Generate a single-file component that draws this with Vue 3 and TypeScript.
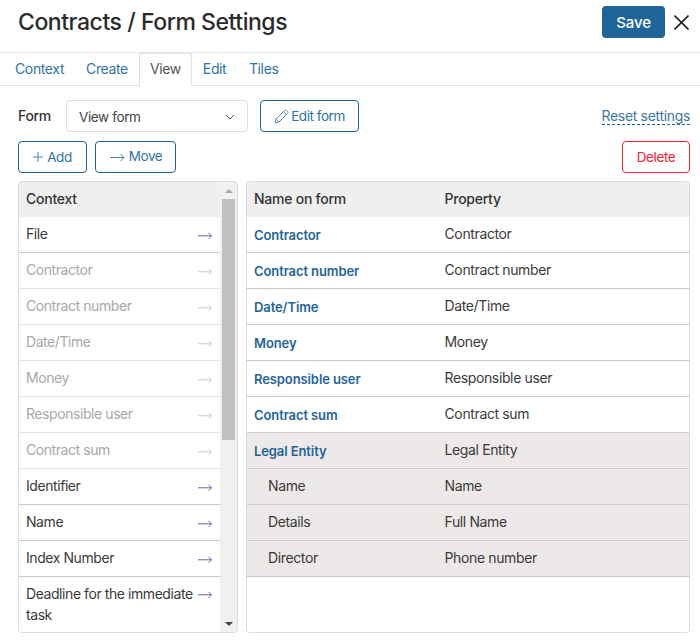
<script setup lang="ts">
const tabs = ['Context', 'Create', 'View', 'Edit', 'Tiles']
const contextRows = [
  { name: 'File', off: false },
  { name: 'Contractor', off: true },
  { name: 'Contract number', off: true },
  { name: 'Date/Time', off: true },
  { name: 'Money', off: true },
  { name: 'Responsible user', off: true },
  { name: 'Contract sum', off: true },
  { name: 'Identifier', off: false },
  { name: 'Name', off: false },
  { name: 'Index Number', off: false },
  { name: 'Deadline for the immediate task', off: false },
]
const formRows = [
  { name: 'Contractor', prop: 'Contractor', kind: 'link' },
  { name: 'Contract number', prop: 'Contract number', kind: 'link' },
  { name: 'Date/Time', prop: 'Date/Time', kind: 'link' },
  { name: 'Money', prop: 'Money', kind: 'link' },
  { name: 'Responsible user', prop: 'Responsible user', kind: 'link' },
  { name: 'Contract sum', prop: 'Contract sum', kind: 'link' },
  { name: 'Legal Entity', prop: 'Legal Entity', kind: 'group' },
  { name: 'Name', prop: 'Name', kind: 'child' },
  { name: 'Details', prop: 'Full Name', kind: 'child' },
  { name: 'Director', prop: 'Phone number', kind: 'child' },
]
</script>

<template>
  <div class="page">
    <header class="top">
      <h1>Contracts / Form Settings</h1>
      <div class="top-actions">
        <button class="save">Save</button>
        <svg class="close" width="15" height="15" viewBox="0 0 15 15"><path d="M0.5 0.5 14.5 14.5M14.5 0.5 0.5 14.5" stroke="#1f1f1f" stroke-width="1.6" fill="none" /></svg>
      </div>
    </header>
    <nav class="tabs">
      <span v-for="t in tabs" :key="t" class="tab" :class="{ active: t === 'View' }">{{ t }}</span>
    </nav>
    <section class="content">
      <div class="form-row">
        <span class="form-label">Form</span>
        <div class="select">
          <span>View form</span>
          <svg width="10" height="6" viewBox="0 0 10 6"><path d="M1 1 5 5 9 1" stroke="#555" stroke-width="1" fill="none" /></svg>
        </div>
        <button class="btn edit">
          <svg width="15" height="15" viewBox="0 0 15 15"><path d="M1 14 2 10 10.5 1.5a1.4 1.4 0 0 1 2 0l1 1a1.4 1.4 0 0 1 0 2L5 13ZM2 10 5 13M9.5 2.5 12.5 5.5" stroke="#5b8db5" stroke-width="1" fill="none" /></svg>
          Edit form
        </button>
        <a class="reset">Reset settings</a>
      </div>
      <div class="action-row">
        <button class="btn add">
          <svg width="10" height="10" viewBox="0 0 10 10"><path d="M5 0V10M0 5H10" stroke="#4a82ab" stroke-width="1" fill="none" /></svg>
          Add
        </button>
        <button class="btn move">
          <svg width="15" height="9" viewBox="0 0 15 9"><path d="M0 4.5H14M10.5 1 14 4.5 10.5 8" stroke="#4a82ab" stroke-width="1" fill="none" /></svg>
          <span class="move-label">Move</span>
        </button>
        <button class="btn delete">Delete</button>
      </div>
      <div class="panels">
        <div class="panel left">
          <div class="left-list">
            <div class="head">Context</div>
            <div v-for="r in contextRows" :key="r.name" class="ctx-row" :class="{ off: r.off }">
              <span class="ctx-name">{{ r.name }}</span>
              <svg class="arrow" width="14" height="9" viewBox="0 0 14 9"><path d="M0 4.8H13.5M10.5 1.8 13.5 4.8 10.5 7.8" :stroke="r.off ? '#c8c8d8' : '#6a62a4'" stroke-width="1" fill="none" /></svg>
            </div>
          </div>
          <div class="scrollbar">
            <span class="up"></span>
            <span class="thumb"></span>
            <span class="down"></span>
          </div>
        </div>
        <div class="panel right">
          <div class="form-head">
            <span>Name on form</span>
            <span>Property</span>
          </div>
          <div v-for="r in formRows" :key="r.name + r.prop" class="form-line" :class="r.kind">
            <span class="fname">{{ r.name }}</span>
            <span class="fprop">{{ r.prop }}</span>
          </div>
        </div>
      </div>
    </section>
  </div>
</template>

<style>
html, body { margin: 0; background: #fff; }
</style>

<style scoped>
.page {
  width: 700px;
  height: 641px;
  overflow: hidden;
  font-family: Inter, "Liberation Sans", sans-serif;
  font-size: 14px;
  color: #333;
  letter-spacing: -0.37px;
  box-sizing: border-box;
}
button { font-family: inherit; letter-spacing: inherit; cursor: pointer; }
.top {
  height: 52px;
  box-sizing: content-box;
  border-bottom: 1px solid #e6e6e6;
  display: flex;
  align-items: flex-start;
  justify-content: space-between;
  padding: 0 11px 0 18px;
}
h1 {
  margin: 6px 0 0;
  font-size: 23px;
  line-height: 32px;
  font-weight: 500;
  color: #2b2b2b;
  letter-spacing: -0.45px;
}
.top-actions { display: flex; align-items: center; gap: 9px; margin-top: 6px; }
.save {
  width: 63px;
  height: 32px;
  border: 0;
  border-radius: 4px;
  background: #1f6599;
  color: #fff;
  font-size: 15px;
  font-weight: 500;
  padding: 0;
  letter-spacing: -0.1px;
}
.close { display: block; }
.tabs {
  height: 32px;
  border-bottom: 1px solid #e0e0e0;
  display: flex;
  padding-left: 4px;
}
.tab {
  padding: 0 11px;
  line-height: 32px;
  color: #2e73a3;
}
.tab.active {
  color: #555;
  background: #fff;
  height: 33px;
  box-sizing: border-box;
  border: 1px solid #e0e0e0;
  border-bottom: 0;
  border-radius: 2px 2px 0 0;
  padding: 0 10px;
  line-height: 30px;
}
.tab:last-child { margin-left: 0.6px; }
.content { padding: 14px 10px 0 18px; }
.form-row { display: flex; align-items: center; height: 32px; }
.form-label { font-weight: 500; width: 48px; color: #333; margin-top: -1px; }
.select {
  width: 182px;
  height: 32px;
  box-sizing: border-box;
  border: 1px solid #ddd;
  border-radius: 4px;
  padding: 1px 12px 0;
  display: flex;
  align-items: center;
  justify-content: space-between;
  color: #444;
  font-size: 13.5px;
}
.btn {
  height: 32px;
  box-sizing: border-box;
  border: 1px solid #1f6599;
  border-radius: 4px;
  background: #fff;
  color: #2e73a3;
  font-size: 13.5px;
  display: inline-flex;
  align-items: center;
  justify-content: center;
  padding: 0;
}
.edit { width: 99px; margin-left: 12px; gap: 2px; letter-spacing: -0.45px; }
.reset {
  margin-left: auto;
  margin-top: -1px;
  color: #3d76a3;
  border-bottom: 1px dashed #1f6599;
  line-height: 17px;
  font-size: 14px;
  letter-spacing: -0.33px;
}
.action-row { display: flex; align-items: center; margin-top: 9px; gap: 8px; }
.add { width: 69px; gap: 4px; }
.move { width: 81px; gap: 4px; padding-left: 1px; }
.move-label { margin-bottom: 2px; }
.delete {
  margin-left: auto;
  width: 68px;
  border-color: #f3222f;
  color: #f3222f;
}
.panels { display: flex; gap: 8px; margin-top: 8px; height: 452px; }
.panel {
  box-sizing: border-box;
  border: 1px solid #dcdcdc;
  border-radius: 4px;
  overflow: hidden;
  background: #fff;
}
.left { width: 220px; display: flex; background: #f0f0f0; }
.left-list { width: 201px; overflow: hidden; flex: none; }
.head {
  height: 35px;
  line-height: 33px;
  padding-left: 7px;
  background: #efefef;
  font-weight: 500;
  color: #333;
  letter-spacing: -0.25px;
}
.ctx-row {
  background: #fff;
  height: 36px;
  box-sizing: border-box;
  border-bottom: 1px solid #c9c9c9;
  padding: 6px 8px 0 7px;
  display: flex;
  align-items: flex-start;
  justify-content: space-between;
  line-height: 21px;
  color: #3a3a3a;
  letter-spacing: -0.43px;
}
.ctx-row .arrow { flex: none; margin-top: 8px; }
.ctx-row.off { color: #a8a8a8; border-bottom-color: #e4e4e4; }
.ctx-row:last-child {
  height: 60px;
  border-bottom: 0;
}
.ctx-row:last-child .arrow { margin-top: 7px; }
.ctx-row:last-child .ctx-name { width: 172px; }
.scrollbar {
  flex: 1;
  display: flex;
  flex-direction: column;
  align-items: center;
  background: #f0f0f0;
}
.up, .down {
  width: 0;
  height: 0;
  border-left: 4px solid transparent;
  border-right: 4px solid transparent;
}
.up { border-bottom: 4px solid #aaa; margin-top: 7px; }
.thumb { width: 13px; height: 241px; background: #c1c1c1; margin-top: 6px; }
.down { border-top: 4px solid #444; margin-top: auto; margin-bottom: 6px; }
.right { flex: 1; }
.form-head, .form-line {
  display: grid;
  grid-template-columns: 190.5px 1fr;
  padding-left: 7px;
  box-sizing: border-box;
}
.form-head {
  height: 35px;
  line-height: 33px;
  background: #efefef;
  font-weight: 500;
  color: #333;
  letter-spacing: -0.25px;
}
.form-line {
  height: 36px;
  line-height: 34px;
  border-bottom: 1px solid #c9c9c9;
  color: #3a3a3a;
}
.fname { color: #3a3a3a; }
.link .fname, .group .fname {
  color: #1f6599;
  font-weight: 600;
  font-size: 13px;
  line-height: 36px;
  letter-spacing: -0.1px;
}
.group, .child { background: #ede9e8; }
.child .fname { padding-left: 14px; }
</style>
